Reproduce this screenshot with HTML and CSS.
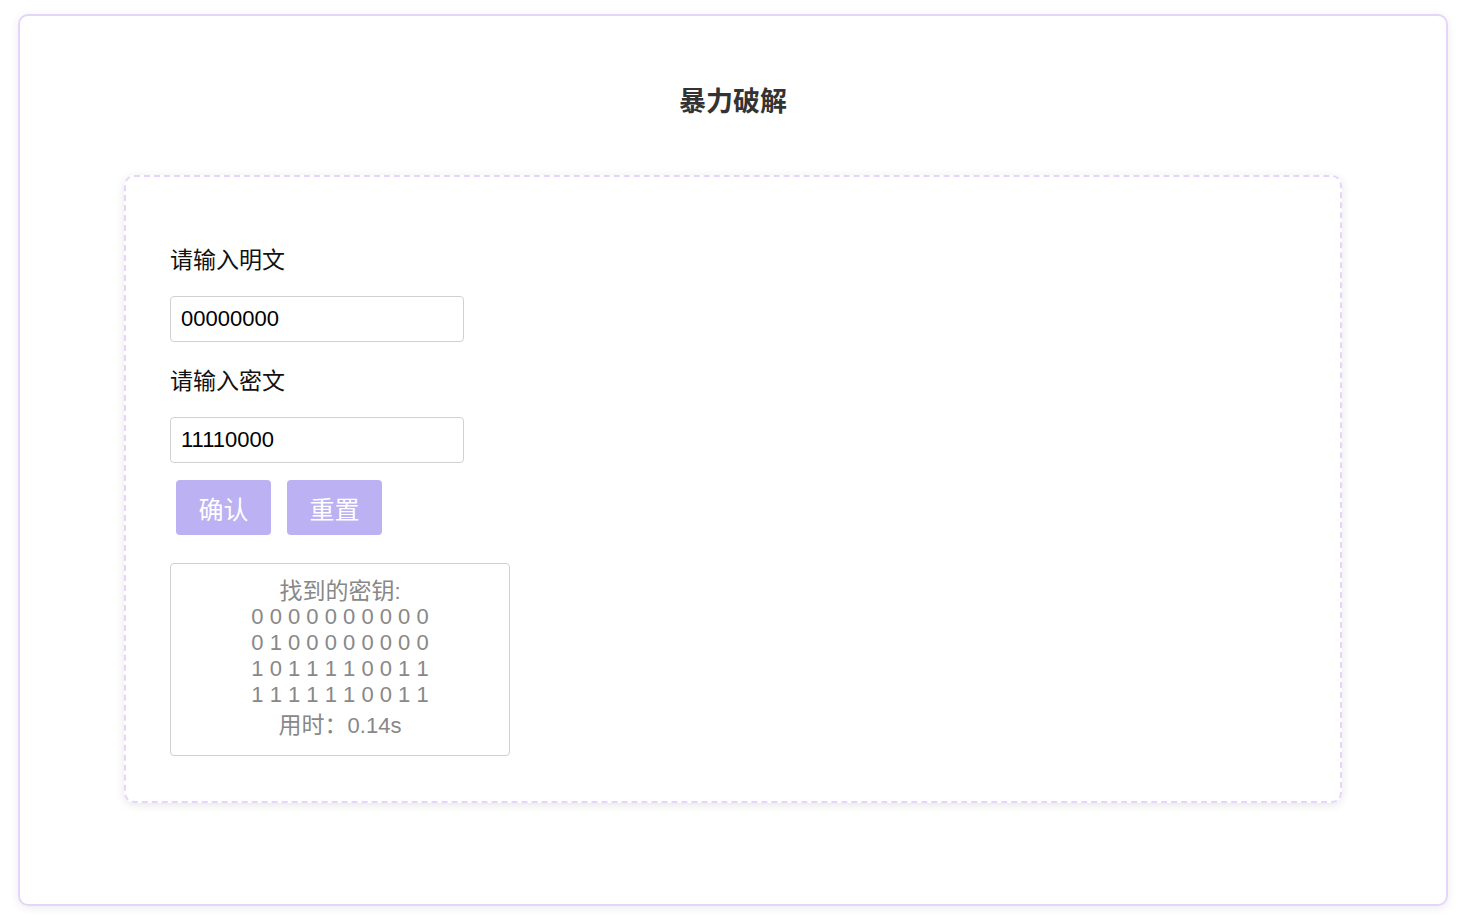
FILE: index.html
```html
<!DOCTYPE html>
<html lang="zh">
<head>
<meta charset="utf-8">
<title>暴力破解</title>
<link rel="stylesheet" href="styles.css">
</head>
<body>
<div class="card">
  <h1 class="title">暴力破解</h1>
  <div class="panel">
    <div class="label">请输入明文</div>
    <input class="field" type="text" value="00000000">
    <div class="label label-second">请输入密文</div>
    <input class="field" type="text" value="11110000">
    <div class="actions">
      <button class="btn">确认</button>
      <button class="btn">重置</button>
    </div>
    <div class="result">
      <div class="line"><span class="cjk">找到的密钥</span>:</div>
      <div class="line">0 0 0 0 0 0 0 0 0 0</div>
      <div class="line">0 1 0 0 0 0 0 0 0 0</div>
      <div class="line">1 0 1 1 1 1 0 0 1 1</div>
      <div class="line">1 1 1 1 1 1 0 0 1 1</div>
      <div class="line time"><span class="cjk">用时：</span>0.14s</div>
    </div>
  </div>
</div>
</body>
</html>
```

FILE: styles.css
```css
* { box-sizing: border-box; }
html, body { margin: 0; padding: 0; background: #fff; }
body {
  font-family: "Liberation Sans", Arial, "Noto Sans CJK SC", sans-serif;
  padding: 14px 12px 16px 18px;
}
.card {
  height: 892px;
  border: 2px solid #e5d5fc;
  border-radius: 10px;
  box-shadow: 0 2px 10px rgba(0, 0, 0, 0.08);
  padding: 0 104px;
  display: flex;
  flex-direction: column;
}
.title {
  margin: 0;
  height: 159px;
  padding-top: 68px;
  text-align: center;
  font-size: 27px;
  line-height: 32px;
  font-weight: bold;
  color: #333;
  font-family: "Noto Sans CJK SC", sans-serif;
}
.panel {
  height: 628px;
  border: 2px dashed #e5d5fc;
  border-radius: 10px;
  box-shadow: 0 2px 10px rgba(0, 0, 0, 0.1);
  padding: 66px 44px 0 44px;
  display: flex;
  flex-direction: column;
  align-items: flex-start;
}
.label {
  font-family: "Noto Sans CJK SC", sans-serif;
  font-size: 23px;
  line-height: 30px;
  color: #111;
  margin-bottom: 23px;
}
.label-second { margin-top: 22px; }
.field {
  width: 294px;
  height: 46px;
  border: 1px solid #d0d0d0;
  border-radius: 4px;
  padding: 0 10px;
  font-family: "Liberation Sans", Arial, sans-serif;
  font-size: 22px;
  color: #000;
  outline: none;
}
.actions {
  display: flex;
  gap: 16px;
  margin-top: 17px;
  padding-left: 6px;
}
.btn {
  width: 95px;
  height: 55px;
  border: none;
  border-radius: 4px;
  background: #bbb1f3;
  color: #fff;
  font-family: "Noto Sans CJK SC", sans-serif;
  font-size: 25px;
  padding: 0;
}
.result {
  margin-top: 28px;
  width: 340px;
  height: 193px;
  border: 1px solid #d0d0d0;
  border-radius: 4px;
  padding-top: 14px;
  text-align: center;
  color: #888;
  font-size: 22px;
}
.line {
  height: 26px;
  line-height: 26px;
  font-family: "Liberation Sans", Arial, "Noto Sans CJK SC", sans-serif;
}
.cjk {
  font-family: "Noto Sans CJK SC", sans-serif;
  font-size: 23px;
  line-height: 1;
}
.time { margin-top: 4px; }
```
